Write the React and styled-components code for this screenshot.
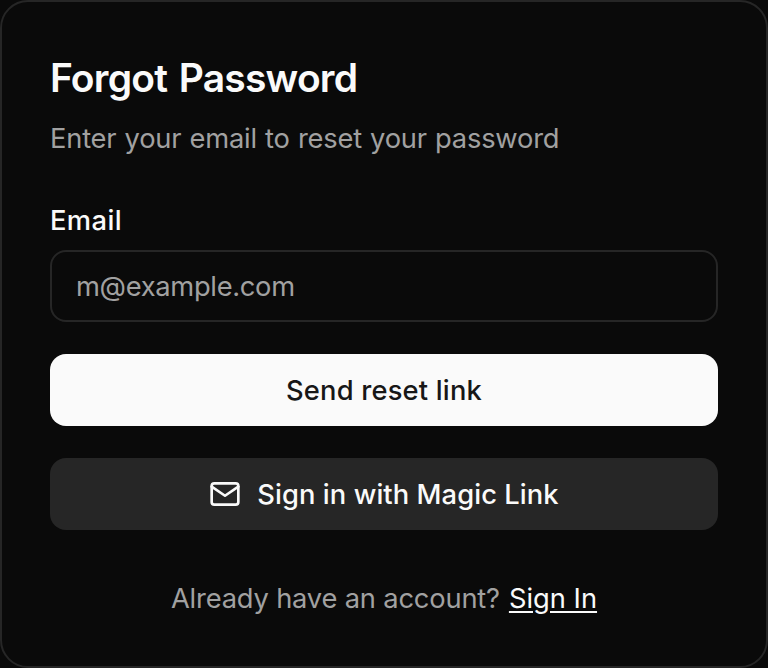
import React from "react";
import styled, { createGlobalStyle } from "styled-components";

const GlobalStyle = createGlobalStyle`
  * { box-sizing: border-box; }
  html, body { margin: 0; background: #0a0a0a; }
`;

const Card = styled.main`
  display: flex;
  flex-direction: column;
  width: 768px;
  height: 668px;
  padding: 48px;
  color: #fafafa;
  background: #0a0a0a;
  border: 2px solid #262626;
  border-radius: 28px;
  font-family: Inter, "Liberation Sans", sans-serif;
  font-size: 27.3px;
  line-height: 40px;
`;

const Title = styled.h1`
  margin: 4px 0 0;
  height: 48px;
  font-size: 39px;
  line-height: 48px;
  font-weight: 600;
  letter-spacing: -0.8px;
  word-spacing: 2.5px;
  white-space: nowrap;
`;

const Description = styled.p`
  margin: 17px 0 0;
  color: #a1a1a1;
  letter-spacing: -0.2px;
  word-spacing: 0.7px;
  white-space: nowrap;
`;

const Form = styled.form`
  display: flex;
  flex-direction: column;
  gap: 32px;
  margin-top: 43px;
`;

const Field = styled.div`
  display: flex;
  flex-direction: column;
  gap: 10px;
`;

const Label = styled.label`
  height: 38px;
  line-height: 38px;
  font-weight: 500;
  letter-spacing: 0.4px;
`;

const Input = styled.input`
  width: 100%;
  height: 72px;
  padding: 0 24px;
  color: #fafafa;
  background: transparent;
  border: 2px solid #262626;
  border-radius: 16px;
  font: inherit;
  letter-spacing: -0.3px;
  outline: none;
  &::placeholder { color: #a1a1a1; opacity: 1; }
`;

const Button = styled.button`
  display: flex;
  align-items: center;
  justify-content: center;
  gap: 16px;
  height: 72px;
  padding: 0;
  border: 0;
  border-radius: 16px;
  font: inherit;
  font-weight: 500;
  letter-spacing: ${({ $secondary }) => ($secondary ? "0.08px" : "0.2px")};
  color: ${({ $secondary }) => ($secondary ? "#fafafa" : "#171717")};
  background: ${({ $secondary }) => ($secondary ? "#262626" : "#fafafa")};
`;

const ButtonText = styled.span`
  padding-top: 2px;
`;

const Footer = styled.p`
  display: flex;
  justify-content: center;
  gap: 9px;
  margin: 49px 0 0;
  color: #a1a1a1;
  letter-spacing: -0.18px;
  white-space: nowrap;
`;

const Link = styled.a`
  color: #fafafa;
  letter-spacing: 0;
  text-decoration: underline;
  text-decoration-thickness: 2px;
  text-underline-offset: 3px;
`;

const MailIcon = () => (
  <svg width="32" height="32" viewBox="0 0 24 24" fill="none" stroke="currentColor" strokeWidth="2" strokeLinecap="round" strokeLinejoin="round" aria-hidden="true">
    <rect x="2" y="4" width="20" height="16" rx="2" />
    <path d="m22 6.5-10 6.8L2 6.5" />
  </svg>
);

export default function App() {
  return (
    <>
      <GlobalStyle />
      <Card>
        <Title>Forgot Password</Title>
        <Description>Enter your email to reset your password</Description>
        <Form onSubmit={(e) => e.preventDefault()}>
          <Field>
            <Label htmlFor="email">Email</Label>
            <Input id="email" type="email" placeholder="m@example.com" />
          </Field>
          <Button type="submit"><ButtonText>Send reset link</ButtonText></Button>
          <Button type="button" $secondary><MailIcon /><ButtonText>Sign in with Magic Link</ButtonText></Button>
        </Form>
        <Footer><span>Already have an account?</span><Link href="#">Sign In</Link></Footer>
      </Card>
    </>
  );
}
